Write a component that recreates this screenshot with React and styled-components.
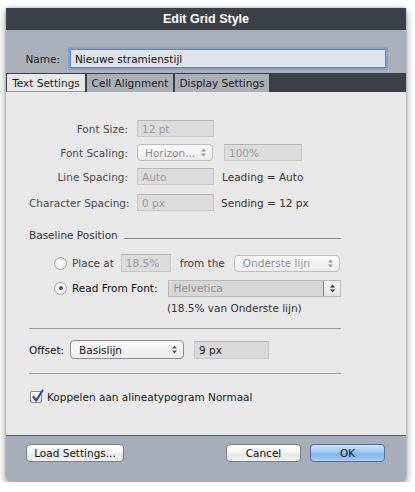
import React from "react";
import styled, { createGlobalStyle } from "styled-components";

const GlobalStyle = createGlobalStyle`
  body {
    margin: 0;
    background: #ffffff;
    font-family: "DejaVu Sans", "Lucida Grande", sans-serif;
    font-size: 10.5px;
  }
`;

const Page = styled.div`
  padding: 8px 0 0 6px;
`;

const Window = styled.div`
  width: 400px;
  border-radius: 0 0 5px 5px;
  overflow: hidden;
  box-shadow: 0 3px 9px rgba(0, 0, 0, 0.45), 0 0 2px rgba(0, 0, 0, 0.3);
`;

const TitleBar = styled.div`
  height: 22px;
  background: #3c4048;
  color: #fff;
  font-family: "Liberation Sans", Arial, sans-serif;
  font-weight: bold;
  font-size: 12.5px;
  display: flex;
  align-items: center;
  justify-content: center;
`;

const NameBand = styled.div`
  background: #a9b0bb;
  display: flex;
  align-items: center;
  padding: 19px 20px 5px 0;
`;

const NameLabel = styled.label`
  width: 54px;
  text-align: right;
  color: #1e1e1e;
  margin-right: 10px;
`;

const NameInput = styled.div`
  flex: 1;
  height: 19px;
  box-sizing: border-box;
  background: #dfe3ea;
  border: 1px solid #5f86c0;
  box-shadow: 0 0 0 2px rgba(105, 150, 215, 0.55);
  display: flex;
  align-items: center;
  padding-left: 4px;
  color: #111;
`;

const TabStrip = styled.div`
  height: 19px;
  background: #3b3f46;
  display: flex;
  gap: 2px;
  padding: 1px 0 0 1px;
  box-sizing: border-box;
`;

const Tab = styled.div`
  width: ${p => p.w}px;
  box-sizing: border-box;
  background: ${p => (p.active ? "#e8e8e8" : "#a9aeb7")};
  color: #1c1c1c;
  display: flex;
  align-items: center;
  justify-content: center;
  border-bottom: ${p => (p.active ? "1px solid #9a9a9a" : "none")};
`;

const Content = styled.div`
  background: #e8e8e8;
  height: 343px;
  box-sizing: border-box;
  padding: 28px 65px 0 23px;
  display: flex;
  flex-direction: column;
`;

const FieldRow = styled.div`
  display: flex;
  align-items: center;
  height: ${p => p.h || 17}px;
  margin-top: ${p => p.mt || 0}px;
`;

const FieldLabel = styled.span`
  width: 99px;
  text-align: right;
  color: #4a4a4a;
  margin-right: 9px;
  white-space: nowrap;
`;

const TextBox = styled.div`
  width: ${p => p.w}px;
  height: ${p => p.h || 17}px;
  box-sizing: border-box;
  background: ${p => (p.enabled ? "#d9d9d9" : "#dcdcdc")};
  border: 1px solid #c6c6c6;
  border-top-color: #b5b5b5;
  color: ${p => (p.enabled ? "#1a1a1a" : "#9b9b9b")};
  display: flex;
  align-items: center;
  padding-left: 4px;
  margin-left: ${p => p.ml || 0}px;
  flex: none;
`;

const PopUp = styled.div`
  width: ${p => p.w}px;
  height: ${p => p.h || 17}px;
  box-sizing: border-box;
  background: linear-gradient(#fbfbfb, #ececec);
  border: 1px solid ${p => (p.enabled ? "#8d8d8d" : "#bdbdbd")};
  border-radius: 4px;
  color: ${p => (p.enabled ? "#111" : "#8f8f8f")};
  display: flex;
  align-items: center;
  justify-content: space-between;
  padding: 0 6px 0 ${p => p.pl || 7}px;
  margin-left: ${p => p.ml || 0}px;
  flex: none;
`;

const ComboBox = styled.div`
  width: ${p => p.w}px;
  height: 17px;
  box-sizing: border-box;
  border: 1px solid #b8b8b8;
  display: flex;
  margin-left: ${p => p.ml || 0}px;
  flex: none;
`;

const ComboText = styled.div`
  flex: 1;
  background: #d7d7d7;
  color: #8f8f8f;
  display: flex;
  align-items: center;
  padding-left: 4px;
`;

const ComboButton = styled.div`
  width: 16px;
  background: linear-gradient(#f7f7f7, #e4e4e4);
  border-left: 1px solid #7f7f7f;
  display: flex;
  align-items: center;
  justify-content: center;
`;

const Note = styled.span`
  color: ${p => p.color || "#333"};
  margin-left: ${p => p.ml || 0}px;
  white-space: nowrap;
`;

const SectionHeader = styled.div`
  display: flex;
  align-items: flex-end;
  height: 14px;
  margin-top: ${p => p.mt || 0}px;
  color: #333;
`;

const HeaderLine = styled.div`
  flex: 1;
  height: 1px;
  background: #8a8a8a;
  margin: 0 0 2px 6px;
`;

const Rule = styled.div`
  height: 1px;
  background: #9a9a9a;
  margin-top: ${p => p.mt || 0}px;
`;

const OptionRow = styled.div`
  display: flex;
  align-items: center;
  height: 18px;
  padding-left: ${p => p.pl || 0}px;
  margin-top: ${p => p.mt || 0}px;
`;

const Radio = styled.span`
  width: 13px;
  height: 13px;
  box-sizing: border-box;
  border-radius: 50%;
  border: 1px solid #a5a5a5;
  background: radial-gradient(circle at 50% 35%, #ffffff, #e4e4e4);
  display: flex;
  align-items: center;
  justify-content: center;
  margin-right: 5px;
  flex: none;
  &::after {
    content: "";
    width: 4px;
    height: 4px;
    border-radius: 50%;
    background: ${p => (p.checked ? "#555" : "transparent")};
  }
`;

const CheckRow = styled.div`
  display: flex;
  align-items: center;
  height: 16px;
  margin-top: ${p => p.mt || 0}px;
  padding-left: 1px;
  color: #1a1a1a;
`;

const CheckBox = styled.span`
  width: 12px;
  height: 12px;
  box-sizing: border-box;
  border: 1px solid #8d8d8d;
  border-radius: 2px;
  background: linear-gradient(#ffffff, #e6e6e6);
  position: relative;
  margin-right: 5px;
  flex: none;
  svg {
    position: absolute;
    left: 0px;
    top: -3px;
  }
`;

const Footer = styled.div`
  background: #a7aeb9;
  border-top: 1px solid #5c5f66;
  height: 47px;
  box-sizing: border-box;
  padding: 8px 21px 0 20px;
  display: flex;
  align-items: flex-start;
`;

const Button = styled.div`
  width: ${p => p.w}px;
  height: 18px;
  box-sizing: border-box;
  border-radius: 4px;
  border: 1px solid ${p => (p.primary ? "#50709c" : "#7d7d7d")};
  background: ${p =>
    p.primary
      ? "linear-gradient(#cfe4fb 0%, #9fc7f2 45%, #7fb2ec 55%, #a9d0f7 100%)"
      : "linear-gradient(#ffffff 0%, #f4f4f4 50%, #e6e6e6 55%, #f3f3f3 100%)"};
  color: #111;
  display: flex;
  align-items: center;
  justify-content: center;
  margin-left: ${p => p.ml || 0}px;
`;

const Spacer = styled.div`
  flex: 1;
`;

const Arrows = ({ color = "#777" }) => (
  <svg width="5" height="9" viewBox="0 0 5 9">
    <path d="M0 3.5 L2.5 0.5 L5 3.5 Z" fill={color} />
    <path d="M0 5.5 L2.5 8.5 L5 5.5 Z" fill={color} />
  </svg>
);

const CheckMark = () => (
  <svg width="13" height="14" viewBox="0 0 13 14">
    <path
      d="M2.5 8 L5.2 11.5 L11.5 1.5"
      fill="none"
      stroke="#2d4f88"
      strokeWidth="2.2"
      strokeLinecap="round"
      strokeLinejoin="round"
    />
  </svg>
);

export default function App() {
  return (
    <Page>
      <GlobalStyle />
      <Window>
        <TitleBar>Edit Grid Style</TitleBar>
        <NameBand>
          <NameLabel>Name:</NameLabel>
          <NameInput>Nieuwe stramienstijl</NameInput>
        </NameBand>
        <TabStrip>
          <Tab w={78} active>Text Settings</Tab>
          <Tab w={86}>Cell Alignment</Tab>
          <Tab w={94}>Display Settings</Tab>
        </TabStrip>
        <Content>
          <FieldRow>
            <FieldLabel>Font Size:</FieldLabel>
            <TextBox w={77}>12 pt</TextBox>
          </FieldRow>
          <FieldRow mt={7}>
            <FieldLabel>Font Scaling:</FieldLabel>
            <PopUp w={76}>
              Horizon...
              <Arrows color="#999" />
            </PopUp>
            <TextBox w={78} ml={11}>100%</TextBox>
          </FieldRow>
          <FieldRow mt={7}>
            <FieldLabel>Line Spacing:</FieldLabel>
            <TextBox w={77}>Auto</TextBox>
            <Note ml={8}>Leading = Auto</Note>
          </FieldRow>
          <FieldRow mt={9}>
            <FieldLabel>Character Spacing:</FieldLabel>
            <TextBox w={77}>0 px</TextBox>
            <Note ml={7}>Sending = 12 px</Note>
          </FieldRow>

          <SectionHeader mt={16}>
            Baseline Position
            <HeaderLine />
          </SectionHeader>

          <OptionRow pl={25} mt={13}>
            <Radio />
            <Note color="#444">Place at</Note>
            <TextBox w={50} h={18} ml={7}>18.5%</TextBox>
            <Note color="#444" ml={9}>from the</Note>
            <PopUp w={106} ml={9} pl={8}>
              Onderste lijn
              <Arrows color="#999" />
            </PopUp>
          </OptionRow>
          <OptionRow pl={25} mt={7}>
            <Radio checked />
            <Note color="#111">Read From Font:</Note>
            <ComboBox w={173} ml={11}>
              <ComboText>Helvetica</ComboText>
              <ComboButton>
                <Arrows color="#333" />
              </ComboButton>
            </ComboBox>
          </OptionRow>
          <OptionRow pl={138} mt={2}>
            <Note>(18.5% van Onderste lijn)</Note>
          </OptionRow>

          <Rule mt={11} />

          <FieldRow mt={11} h={19}>
            <Note color="#111">Offset:</Note>
            <PopUp w={114} h={19} ml={6} pl={8} enabled>
              Basislijn
              <Arrows color="#555" />
            </PopUp>
            <TextBox w={75} h={18} ml={10} enabled>
              9 px
            </TextBox>
          </FieldRow>

          <Rule mt={14} />

          <CheckRow mt={15}>
            <CheckBox>
              <CheckMark />
            </CheckBox>
            Koppelen aan alineatypogram Normaal
          </CheckRow>
        </Content>
        <Footer>
          <Button w={98}>Load Settings...</Button>
          <Spacer />
          <Button w={75}>Cancel</Button>
          <Button w={75} ml={9} primary>
            OK
          </Button>
        </Footer>
      </Window>
    </Page>
  );
}
